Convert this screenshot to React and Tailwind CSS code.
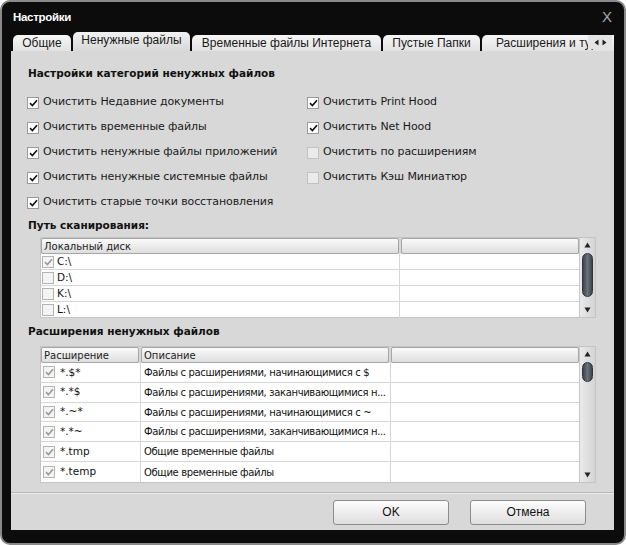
import React from "react";

const dv = "font-['DejaVu_Sans',sans-serif]";
const ar = "font-['Liberation_Sans',Arial,sans-serif]";

function Tick({ color = "#111" }) {
  return (
    <svg width="9" height="8" viewBox="0 0 9 8" className="block">
      <path d="M1 4.2 L3.4 6.5 L8 1.2" fill="none" stroke={color} strokeWidth="1.6" />
    </svg>
  );
}

function MainCheck({ checked, label }) {
  return (
    <div className="flex items-center h-[25px]">
      <div
        className={
          "w-[12px] h-[12px] flex items-center justify-center border " +
          (checked ? "bg-white border-[#9a9a9a]" : "bg-[#ebebeb] border-[#c2c2c2]")
        }
      >
        {checked && <Tick />}
      </div>
      <span className={dv + " text-[11px] tracking-[-0.1px] text-[#1a1a1a] ml-[4px] whitespace-nowrap"}>{label}</span>
    </div>
  );
}

function GrayCheck({ checked }) {
  return (
    <div className="w-[12px] h-[12px] flex items-center justify-center border border-[#b4b4b4] bg-[#f4f4f4] shrink-0">
      {checked && <Tick color="#9a9a9a" />}
    </div>
  );
}

function HeaderCell({ w, children, grow }) {
  return (
    <div
      className={
        (grow ? "flex-1 " : "") +
        "h-full flex items-center px-[2px] border border-[#a6a6a6] rounded-[2px] bg-gradient-to-b from-[#fafafa] to-[#dedede] " +
        dv +
        " text-[10px] text-[#222] whitespace-nowrap overflow-hidden"
      }
      style={w ? { width: w } : undefined}
    >
      {children}
    </div>
  );
}

function ScrollBar({ thumbTop, thumbH }) {
  return (
    <div className="w-[16px] shrink-0 bg-gradient-to-r from-[#eaeaea] to-[#d4d4d4] border-l border-[#c8c8c8] flex flex-col items-center relative">
      <div className="h-[14px] flex items-center justify-center">
        <svg width="7" height="6" viewBox="0 0 7 6"><path d="M3.5 0.5 L6.5 5.5 L0.5 5.5 Z" fill="#222" /></svg>
      </div>
      <div className="flex-1 w-full relative">
        <div
          className="absolute left-[2px] w-[11px] rounded-full border border-[#30353b] bg-gradient-to-r from-[#3e444c] via-[#6b727a] to-[#3e444c]"
          style={{ top: thumbTop, height: thumbH }}
        />
      </div>
      <div className="h-[14px] flex items-center justify-center">
        <svg width="7" height="6" viewBox="0 0 7 6"><path d="M0.5 0.5 L6.5 0.5 L3.5 5.5 Z" fill="#222" /></svg>
      </div>
    </div>
  );
}

function Tab({ children, active, w }) {
  return (
    <div
      className={
        ar +
        " shrink-0 flex items-center justify-center text-[12px] text-[#1a1a1a] rounded-t-[5px] whitespace-nowrap overflow-hidden " +
        (active
          ? "h-[19px] bg-gradient-to-b from-[#f2f2f2] to-[#d8d8d8] pb-[3px]"
          : "h-[16px] bg-gradient-to-b from-[#f7f7f7] to-[#e2e2e2]")
      }
      style={{ width: w }}
    >
      {children}
    </div>
  );
}

export default function App() {
  const drives = [
    { n: "C:\\", c: true },
    { n: "D:\\", c: false },
    { n: "K:\\", c: false },
    { n: "L:\\", c: false },
  ];
  const exts = [
    ["*.$*", "Файлы с расширениями, начинающимися с $"],
    ["*.*$", "Файлы с расширениями, заканчивающимися н..."],
    ["*.~*", "Файлы с расширениями, начинающимися с ~"],
    ["*.*~", "Файлы с расширениями, заканчивающимися н..."],
    ["*.tmp", "Общие временные файлы"],
    ["*.temp", "Общие временные файлы"],
  ];
  return (
    <div className="w-[626px] h-[545px] bg-white">
      <div className="w-full h-full rounded-[10px] border-2 border-[#8a8a8a] bg-[#0c0c0c] flex flex-col overflow-hidden">
        {/* title bar */}
        <div className="h-[30px] flex items-center justify-between pl-[11px] pr-[12px] pt-[1px]">
          <span className={ar + " text-white font-bold text-[11.5px] tracking-[-0.3px]"}>Настройки</span>
          <span className={ar + " text-[#a8a8a8] text-[15px]"}>X</span>
        </div>
        <div className="flex-1 flex flex-col pl-[9px] pr-[10px] pb-[13px]">
          {/* tabs */}
          <div className="h-[19px] flex items-end gap-[2px] pl-[2px] relative overflow-hidden">
            <Tab w={58}>Общие</Tab>
            <Tab w={117} active>
              Ненужные файлы
            </Tab>
            <Tab w={189}>Временные файлы Интернета</Tab>
            <Tab w={97}>Пустые Папки</Tab>
            <Tab w={140}>
              <span className="pl-[14px] w-full">Расширения и туры</span>
            </Tab>
            <div className="absolute right-[2px] bottom-[2px] w-[24px] h-[14px] bg-[#e4e4e4] flex items-center justify-center gap-[3px]">
              <svg width="5" height="7" viewBox="0 0 5 7"><path d="M4.5 0.5 L4.5 6.5 L0.5 3.5 Z" fill="#222" /></svg>
              <svg width="5" height="7" viewBox="0 0 5 7"><path d="M0.5 0.5 L0.5 6.5 L4.5 3.5 Z" fill="#222" /></svg>
            </div>
          </div>
          {/* content */}
          <div className="flex-1 bg-[#d8d8d8] flex flex-col">
            <div className="pl-[17px] pt-[14px]">
              <div className={dv + " font-bold text-[10.5px] leading-[16px] text-[#111]"}>
                Настройки категорий ненужных файлов
              </div>
              <div className="flex mt-[9px]">
                <div className="w-[280px] -ml-[1px]">
                  <MainCheck checked label="Очистить Недавние документы" />
                  <MainCheck checked label="Очистить временные файлы" />
                  <MainCheck checked label="Очистить ненужные файлы приложений" />
                  <MainCheck checked label="Очистить ненужные системные файлы" />
                  <MainCheck checked label="Очистить старые точки восстановления" />
                </div>
                <div>
                  <MainCheck checked label="Очистить Print Hood" />
                  <MainCheck checked label="Очистить Net Hood" />
                  <MainCheck label="Очистить по расширениям" />
                  <MainCheck label="Очистить Кэш Миниатюр" />
                </div>
              </div>
              <div className={dv + " font-bold text-[10.5px] leading-[16px] text-[#111] mt-[2px]"}>Путь сканирования:</div>
            </div>
            {/* table 1 */}
            <div className="ml-[29px] mt-[4px] w-[556px] h-[81px] flex border border-[#c4c4c4] bg-white">
              <div className="flex-1 flex flex-col">
                <div className="h-[16px] flex gap-[2px] bg-[#d8d8d8]">
                  <HeaderCell w={358}>Локальный диск</HeaderCell>
                  <HeaderCell grow></HeaderCell>
                </div>
                {drives.map((d, i) => (
                  <div key={i} className="h-[16px] flex border-b border-[#d6d6d6] last:border-b-0">
                    <div className="w-[359px] flex items-center pl-[1px] border-r border-[#d6d6d6]">
                      <GrayCheck checked={d.c} />
                      <span className={dv + " text-[10.5px] text-[#111] ml-[3px]"}>{d.n}</span>
                    </div>
                    <div className="flex-1" />
                  </div>
                ))}
              </div>
              <ScrollBar thumbTop={1} thumbH={44} />
            </div>
            <div className={dv + " font-bold text-[10.5px] leading-[16px] text-[#111] pl-[17px] mt-[5px]"}>
              Расширения ненужных файлов
            </div>
            {/* table 2 */}
            <div className="ml-[29px] mt-[7px] w-[556px] h-[137px] flex border border-[#c4c4c4] bg-white">
              <div className="flex-1 flex flex-col">
                <div className="h-[16px] flex gap-[2px] bg-[#d8d8d8]">
                  <HeaderCell w={98}>Расширение</HeaderCell>
                  <HeaderCell w={248}>Описание</HeaderCell>
                  <HeaderCell grow></HeaderCell>
                </div>
                {exts.map((e, i) => (
                  <div key={i} className="h-[20px] flex border-b border-[#d6d6d6] last:border-b-0">
                    <div className="w-[100px] flex items-center pl-[2px] border-r border-[#d6d6d6]">
                      <GrayCheck checked />
                      <span className={dv + " text-[10.5px] text-[#111] ml-[5px]"}>{e[0]}</span>
                    </div>
                    <div className="w-[250px] flex items-center pl-[3px] border-r border-[#d6d6d6] overflow-hidden">
                      <span className={dv + " text-[10px] tracking-[-0.35px] text-[#111] whitespace-nowrap"}>{e[1]}</span>
                    </div>
                    <div className="flex-1" />
                  </div>
                ))}
              </div>
              <ScrollBar thumbTop={1} thumbH={20} />
            </div>
            {/* separator */}
            <div className="mt-[9px] h-[1px] bg-[#b8b8b8] border-b border-[#ececec] box-content" />
            <div className="flex-1 flex items-center justify-end gap-[21px] pr-[28px]">
              <button className={ar + " w-[116px] h-[25px] rounded-[3px] border border-[#8c8c8c] bg-gradient-to-b from-[#fdfdfd] to-[#dedede] text-[12px] text-[#111]"}>
                OK
              </button>
              <button className={ar + " w-[116px] h-[25px] rounded-[3px] border border-[#8c8c8c] bg-gradient-to-b from-[#fdfdfd] to-[#dedede] text-[12px] text-[#111]"}>
                Отмена
              </button>
            </div>
          </div>
        </div>
      </div>
    </div>
  );
}
